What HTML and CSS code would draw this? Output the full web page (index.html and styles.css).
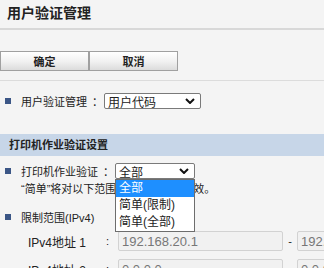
FILE: index.html
```html
<!DOCTYPE html>
<html lang="zh-CN">
<head>
    <meta charset="UTF-8">
    <title>用户验证管理</title>
    <link rel="stylesheet" href="styles.css">
</head>
<body>
    <h1 class="title">用户验证管理</h1>

    <div class="actions">
        <button type="button" class="btn">确定</button>
        <button type="button" class="btn">取消</button>
    </div>

    <div class="row row-auth">
        <span class="bullet"></span>
        <span class="label">用户验证管理</span>
        <span class="colon">：</span>
        <div class="select select-auth">
            <span>用户代码</span>
            <svg class="chevron" viewBox="0 0 10 6" width="10" height="6"><path d="M1 1l4 4 4-4" fill="none" stroke="#111" stroke-width="2"/></svg>
        </div>
    </div>

    <div class="section">打印机作业验证设置</div>

    <div class="row row-job">
        <span class="bullet"></span>
        <span class="label">打印机作业验证</span>
        <span class="colon">：</span>
        <div class="select-wrap">
            <div class="select select-job">
                <span>全部</span>
                <svg class="chevron" viewBox="0 0 10 6" width="10" height="6"><path d="M1 1l4 4 4-4" fill="none" stroke="#111" stroke-width="2"/></svg>
            </div>
            <ul class="dropdown">
                <li class="selected">全部</li>
                <li>简单(限制)</li>
                <li>简单(全部)</li>
            </ul>
        </div>
    </div>

    <p class="note">“简单”将对以下范围内的打印作业生效。</p>

    <div class="row row-range">
        <span class="bullet"></span>
        <span class="label">限制范围(IPv4)</span>
    </div>

    <div class="ip-list">
        <div class="ip-row">
            <span class="ip-label">IPv4地址 1</span>
            <span class="ip-colon">:</span>
            <input class="ip-input" type="text" value="192.168.20.1" disabled>
            <span class="dash">-</span>
            <input class="ip-input ip-end" type="text" value="192.168.20.254" disabled>
        </div>
        <div class="ip-row">
            <span class="ip-label">IPv4地址 2</span>
            <span class="ip-colon">:</span>
            <input class="ip-input" type="text" value="0.0.0.0" disabled>
            <span class="dash">-</span>
            <input class="ip-input ip-end" type="text" value="0.0.0.0" disabled>
        </div>
    </div>
</body>
</html>
```

FILE: styles.css
```css
body {
    margin: 0;
    background-color: #f4f4f4;
    color: #222;
    font-family: "Liberation Sans", "Noto Sans CJK SC", sans-serif;
    font-size: 11px;
    overflow: hidden;
}

.title {
    margin: 0;
    height: 30px;
    padding: 0 7px;
    box-sizing: border-box;
    font-size: 14px;
    font-weight: bold;
    line-height: 27px;
    border-bottom: 2px solid #d8d8d8;
}

.actions {
    display: flex;
    padding: 21px 0 9px 0;
    border-bottom: 1px solid #dcdcdc;
}

.btn {
    width: 89px;
    height: 20px;
    margin: 0;
    padding: 0;
    border: 1px solid #a0a0a0;
    background: linear-gradient(#ffffff, #f2f2f2 50%, #dcdcdc);
    font-family: inherit;
    font-size: 11px;
    font-weight: bold;
    color: #222;
}

.row {
    display: flex;
    align-items: center;
    padding-left: 5px;
}

.row-auth {
    margin-top: 12px;
    height: 16px;
}

.bullet {
    flex-shrink: 0;
    width: 6px;
    height: 6px;
    background-color: #3b5686;
    margin-right: 10px;
}

.label {
    white-space: nowrap;
}

.colon {
    margin-left: 5px;
    width: 12px;
}

.select {
    display: flex;
    align-items: center;
    justify-content: space-between;
    height: 16px;
    box-sizing: border-box;
    padding: 0 5px 0 3px;
    border: 1px solid #7a7a7a;
    border-radius: 2px;
    background-color: #fff;
    font-size: 12px;
}

.select-auth {
    width: 97px;
}

.chevron {
    display: block;
}

.section {
    margin-top: 25px;
    height: 22px;
    line-height: 22px;
    padding-left: 9px;
    background-color: #c7d6e8;
    font-weight: bold;
}

.row-job {
    margin-top: 7px;
    height: 16px;
}

.select-wrap {
    position: relative;
}

.select-job {
    width: 80px;
}

.dropdown {
    position: absolute;
    top: 16px;
    left: 0;
    width: 80px;
    margin: 0;
    padding: 0;
    list-style: none;
    box-sizing: border-box;
    border: 1px solid #6d6d6d;
    background-color: #fff;
    font-size: 12px;
    z-index: 2;
}

.dropdown li {
    height: 17px;
    line-height: 17px;
    padding-left: 3px;
}

.dropdown li.selected {
    background-color: #1e8fff;
    color: #fff;
}

.note {
    margin: 1px 0 0 21px;
    height: 18px;
    line-height: 18px;
    white-space: nowrap;
}

.row-range {
    margin-top: 11px;
    height: 16px;
}

.ip-list {
    display: flex;
    flex-direction: column;
    gap: 8px;
    margin-top: 6px;
}

.ip-row {
    display: flex;
    align-items: center;
    padding-left: 28px;
    height: 20px;
    white-space: nowrap;
}

.ip-row > * {
    flex-shrink: 0;
}

.ip-label {
    width: 78px;
    font-size: 12px;
}

.ip-colon {
    width: 12px;
}

.ip-input {
    width: 165px;
    height: 20px;
    box-sizing: border-box;
    margin: 0;
    padding: 0 3px;
    border: 1px solid #d2d2d2;
    border-radius: 2px;
    background-color: #f1f1f1;
    color: #777;
    font-family: inherit;
    font-size: 13px;
}

.dash {
    width: 14px;
    text-align: center;
}

.ip-end {
    width: 80px;
}
```
